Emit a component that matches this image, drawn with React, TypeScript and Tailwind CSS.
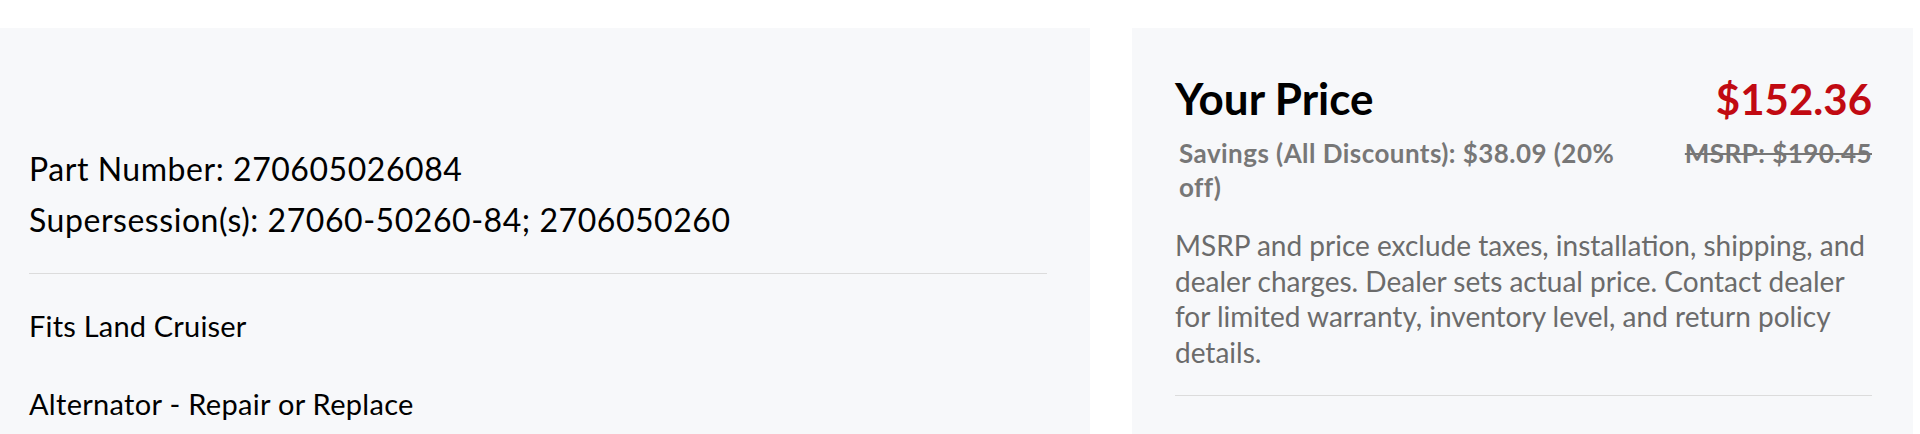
const partInfo = {
  number: "270605026084",
  supersessions: "27060-50260-84; 2706050260",
  fits: "Land Cruiser",
  application: "Alternator - Repair or Replace",
}

const price = {
  yours: "$152.36",
  msrp: "$190.45",
  savings: "$38.09 (20% off)",
}

function PartDetails() {
  return (
    <div className="w-[1090px] shrink-0 bg-[#f7f8fa] pl-[29px] pr-[43px] pt-[115px]">
      <div className="text-[32px] leading-[51px] tracking-[0.55px] text-black">
        <p>{`Part Number: ${partInfo.number}`}</p>
        <p>{`Supersession(s): ${partInfo.supersessions}`}</p>
      </div>
      <div className="mt-[28px] h-px bg-[#dcdcdc]" />
      <p className="mt-[32px] text-[29px] leading-[40px] tracking-[0.2px] text-black">{`Fits ${partInfo.fits}`}</p>
      <p className="mt-[38px] text-[29px] leading-[40px] tracking-[0.3px] text-black">{partInfo.application}</p>
    </div>
  )
}

function PriceBox() {
  return (
    <div className="w-[781px] shrink-0 bg-[#f7f8fa] pl-[43px] pr-[41px] pt-[43px]">
      <div className="flex items-baseline justify-between font-bold">
        <h2 className="text-[44px] leading-[54px] text-black">Your Price</h2>
        <span className="text-[42px] leading-[54px] text-[#c10a12]">{price.yours}</span>
      </div>
      <div className="mt-[10px] flex items-start justify-between text-[26px] font-bold leading-[34px] tracking-[0.45px] text-[#777]">
        <p className="ml-[4px] w-[455px]">{`Savings (All Discounts): ${price.savings}`}</p>
        <p className="line-through">{`MSRP: ${price.msrp}`}</p>
      </div>
      <p className="mt-[24px] text-[28px] leading-[35.5px] text-[#6b6b6b]">
        MSRP and price exclude taxes, installation, shipping, and dealer charges. Dealer sets actual price.
        Contact dealer for limited warranty, inventory level, and return policy details.
      </p>
      <div className="mt-[25px] h-px bg-[#dcdcdc]" />
    </div>
  )
}

export default function App() {
  return (
    <div className="h-[434px] overflow-hidden bg-white pt-[28px] font-['Lato',sans-serif]">
      <div className="flex h-full gap-[42px]">
        <PartDetails />
        <PriceBox />
      </div>
    </div>
  )
}
